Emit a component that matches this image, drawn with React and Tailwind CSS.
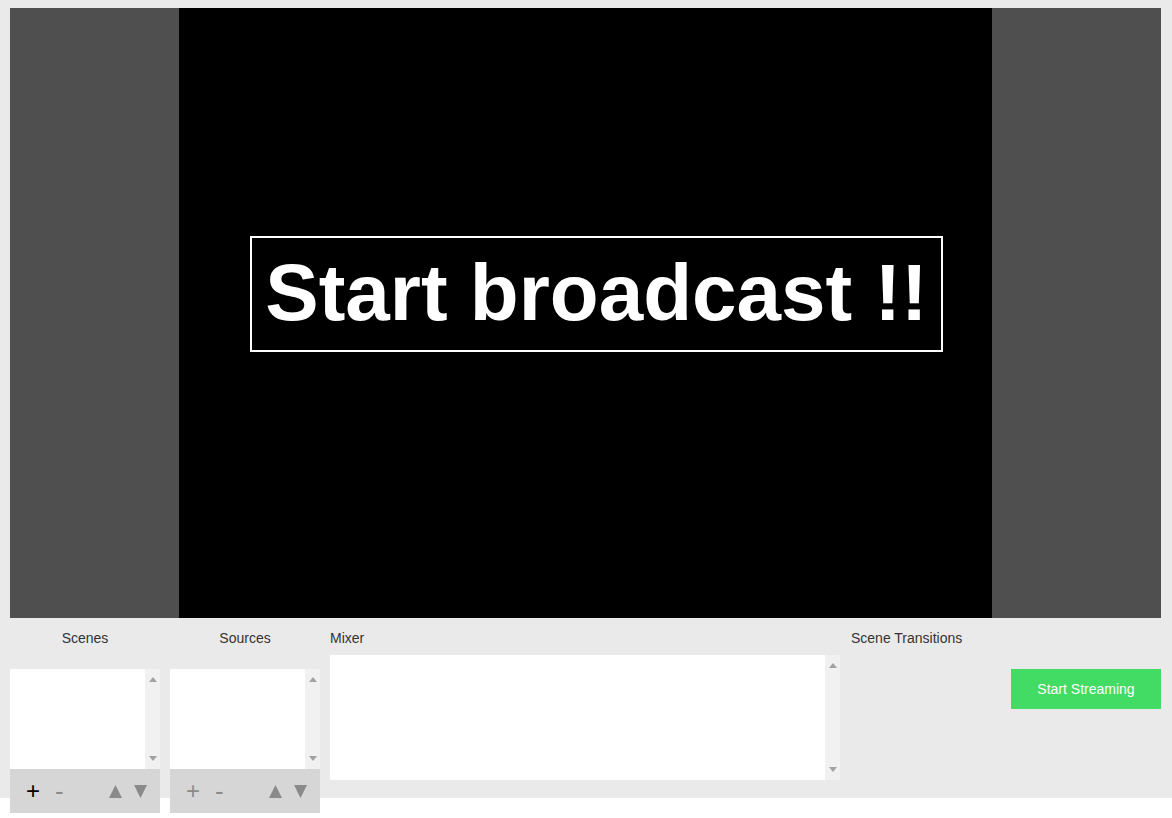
import React from 'react';

const font = { fontFamily: '"Liberation Sans", Arial, sans-serif' };

// fake native scrollbar with tiny arrow triangles
function Scrollbar() {
  return (
    <div className="w-[15px] h-full bg-[#f1f1f1] flex flex-col items-center justify-between py-[8px]">
      <svg width="8" height="5" viewBox="0 0 8 5"><path d="M0 5 L4 0 L8 5 Z" fill="#a3a3a3" /></svg>
      <svg width="8" height="5" viewBox="0 0 8 5"><path d="M0 0 L8 0 L4 5 Z" fill="#a3a3a3" /></svg>
    </div>
  );
}

function ListPanel({ title, plusActive }) {
  return (
    <div className="w-[150px] flex flex-col">
      <div className="h-[40px] flex items-center justify-center text-[14px] text-[#333]">{title}</div>
      <div className="h-[11px]" />
      <div className="h-[100px] flex bg-white">
        <div className="flex-1" />
        <Scrollbar />
      </div>
      <div className="h-[44px] bg-[#d6d6d6] flex items-center pl-[16px] pr-[13px]">
        <span className={plusActive ? 'text-[24px] leading-none text-black w-[29px]' : 'text-[24px] leading-none text-[#8a8a8a] w-[29px]'}>+</span>
        <span className="text-[26px] leading-none text-[#8a8a8a]">-</span>
        <div className="flex-1" />
        <svg width="13" height="13" viewBox="0 0 13 13" className="mr-[12px]"><path d="M0 13 L6.5 0 L13 13 Z" fill="#8a8a8a" /></svg>
        <svg width="13" height="13" viewBox="0 0 13 13"><path d="M0 0 L13 0 L6.5 13 Z" fill="#8a8a8a" /></svg>
      </div>
    </div>
  );
}

export default function App() {
  return (
    <div className="w-[1172px] h-[818px] bg-white" style={font}>
      <div className="h-[798px] bg-[#eaeaea] flex flex-col">
        {/* Preview */}
        <div className="shrink-0 mt-[8px] ml-[10px] mr-[11px] h-[610px] bg-[#4f4f4f] flex justify-center">
          <div className="relative w-[813px] h-full bg-black">
            <div className="absolute left-[71px] top-[228px] w-[693px] h-[116px] border-2 border-white flex items-center justify-center">
              <span className="text-white font-bold text-[80px] leading-none pb-[2px]">Start broadcast !!</span>
            </div>
          </div>
        </div>

        {/* Bottom dock */}
        <div className="shrink-0 flex pl-[10px] gap-[10px]">
          <ListPanel title="Scenes" plusActive />
          <ListPanel title="Sources" />
          <div className="w-[510px] flex flex-col">
            <div className="h-[37px] pt-[3px] flex items-center text-[14px] text-[#333]">Mixer</div>
            <div className="h-[125px] flex bg-white">
              <div className="flex-1" />
              <Scrollbar />
            </div>
          </div>
          <div className="w-[151px] pl-[1px] flex flex-col">
            <div className="h-[40px] flex items-center text-[14px] text-[#333] whitespace-nowrap">Scene Transitions</div>
          </div>
          <div className="flex flex-col">
            <div className="h-[51px]" />
            <button className="w-[150px] h-[40px] bg-[#42db63] text-white text-[14px]">Start Streaming</button>
          </div>
        </div>
      </div>
    </div>
  );
}
